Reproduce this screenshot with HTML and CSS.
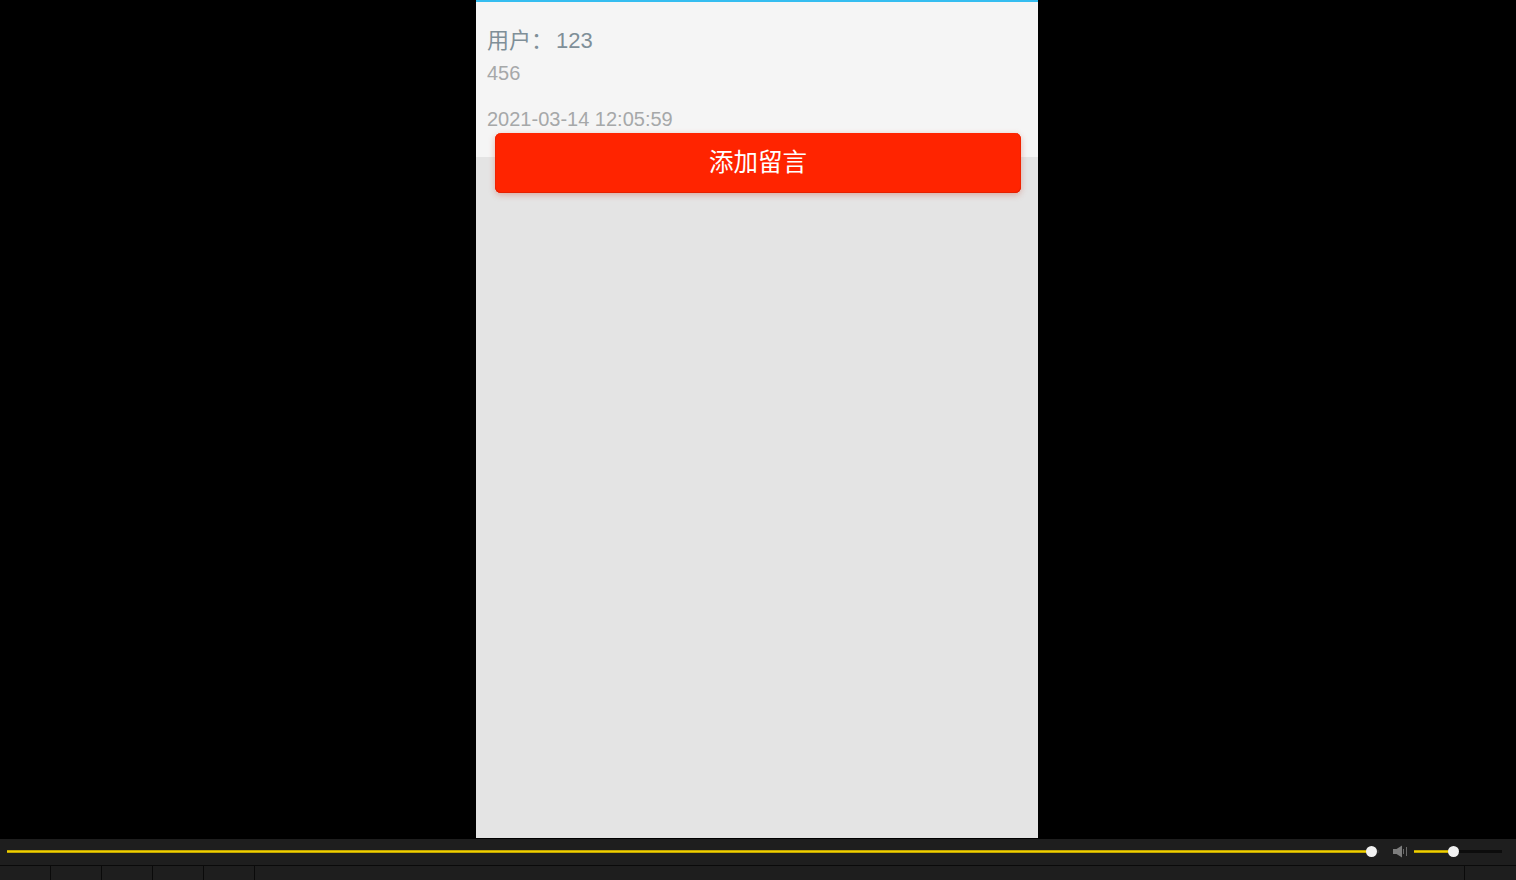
FILE: index.html
```html
<!DOCTYPE html>
<html lang="zh-CN">
<head>
<meta charset="utf-8">
<title>留言</title>
<link rel="stylesheet" href="styles.css">
</head>
<body>
<main class="stage">
  <section class="phone">
    <article class="message">
      <div class="user">用户：<span class="user-id">123</span></div>
      <div class="content">456</div>
      <div class="time">2021-03-14 12:05:59</div>
    </article>
    <button class="add" type="button">添加留言</button>
  </section>
</main>
<footer class="player">
  <div class="controls">
    <div class="track seek"><span class="fill seek-fill"></span><span class="knob"></span></div>
    <svg class="speaker" viewBox="0 0 14 13" width="14" height="13" aria-hidden="true">
      <path d="M0 4h3.500L9 0.500v12L3.500 9H0z" fill="#7d7d7d"/>
      <path d="M10.500 4v5M13.500 2v9" stroke="#6a6a6a" stroke-width="1" fill="none"/>
    </svg>
    <div class="track volume"><span class="fill volume-fill"></span><span class="knob"></span></div>
  </div>
  <nav class="tabs">
    <span class="tab"></span><span class="tab"></span><span class="tab"></span><span class="tab"></span><span class="tab"></span>
    <span class="tab tab-wide"></span>
    <span class="tab tab-last"></span>
  </nav>
</footer>
</body>
</html>
```
FILE: styles.css
```css
* { box-sizing: border-box; }
html, body { margin: 0; height: 100%; }
body {
  display: flex;
  flex-direction: column;
  height: 880px;
  overflow: hidden;
  background: #000;
  font-family: "Liberation Sans", "Noto Sans CJK SC", sans-serif;
}
.stage {
  flex: 0 0 838px;
  display: flex;
  justify-content: center;
  padding-right: 2px;
  background: #000;
}
.phone {
  position: relative;
  width: 562px;
  background: #e4e4e4;
  border-top: 2px solid #35bdf0;
}
.message {
  height: 155px;
  padding: 24px 11px 0;
  background: #f5f5f5;
}
.user {
  font-size: 22px;
  line-height: 30px;
  color: #7f8f98;
}
.user-id { margin-left: 3px; }
.content {
  margin-top: 4px;
  font-size: 20px;
  line-height: 26px;
  color: #a6a8a9;
}
.time {
  margin-top: 20px;
  font-size: 20px;
  line-height: 26px;
  color: #a6a8a9;
}
.add {
  position: absolute;
  left: 19px;
  top: 131px;
  width: 526px;
  height: 60px;
  padding: 0 0 6px;
  border: 0;
  border-radius: 6px;
  background: #ff2400;
  color: #fff;
  font: inherit;
  font-size: 24.500px;
  box-shadow: inset 0 -1px 0 #e52000, inset 1px 0 0 #ef2200, inset -1px 0 0 #ef2200, 0 2px 6px rgba(200, 60, 40, 0.35);
}
.player {
  flex: 0 0 42px;
  display: flex;
  flex-direction: column;
  margin-top: 1px;
  background: #1e1e1e;
}
.controls {
  flex: 0 0 26px;
  display: flex;
  align-items: center;
  padding: 0 14px 1px 7px;
}
.track {
  position: relative;
  height: 3px;
  background: #0c0c0c;
}
.seek { flex: 1; margin-right: 14px; background: #333; }
.volume { flex: 0 0 88px; }
.fill {
  display: block;
  height: 3px;
  background: linear-gradient(#a89000, #f0d000 50%, #a89000);
}
.seek-fill { width: calc(100% - 7px); }
.volume-fill { width: 39px; }
.knob {
  position: absolute;
  top: -4px;
  width: 11px;
  height: 11px;
  border-radius: 50%;
  background: #f2f2f2;
}
.seek .knob { right: 2px; }
.volume .knob { left: 34px; }
.speaker { margin-right: 7px; flex: none; }
.tabs {
  flex: 1;
  display: flex;
  border-top: 1px solid #0a0a0a;
}
.tab {
  flex: 0 0 51px;
  border-right: 1px solid #0a0a0a;
}
.tab-wide { flex: 1; }
.tab-last { flex: 0 0 51px; border-right: 0; }
```
